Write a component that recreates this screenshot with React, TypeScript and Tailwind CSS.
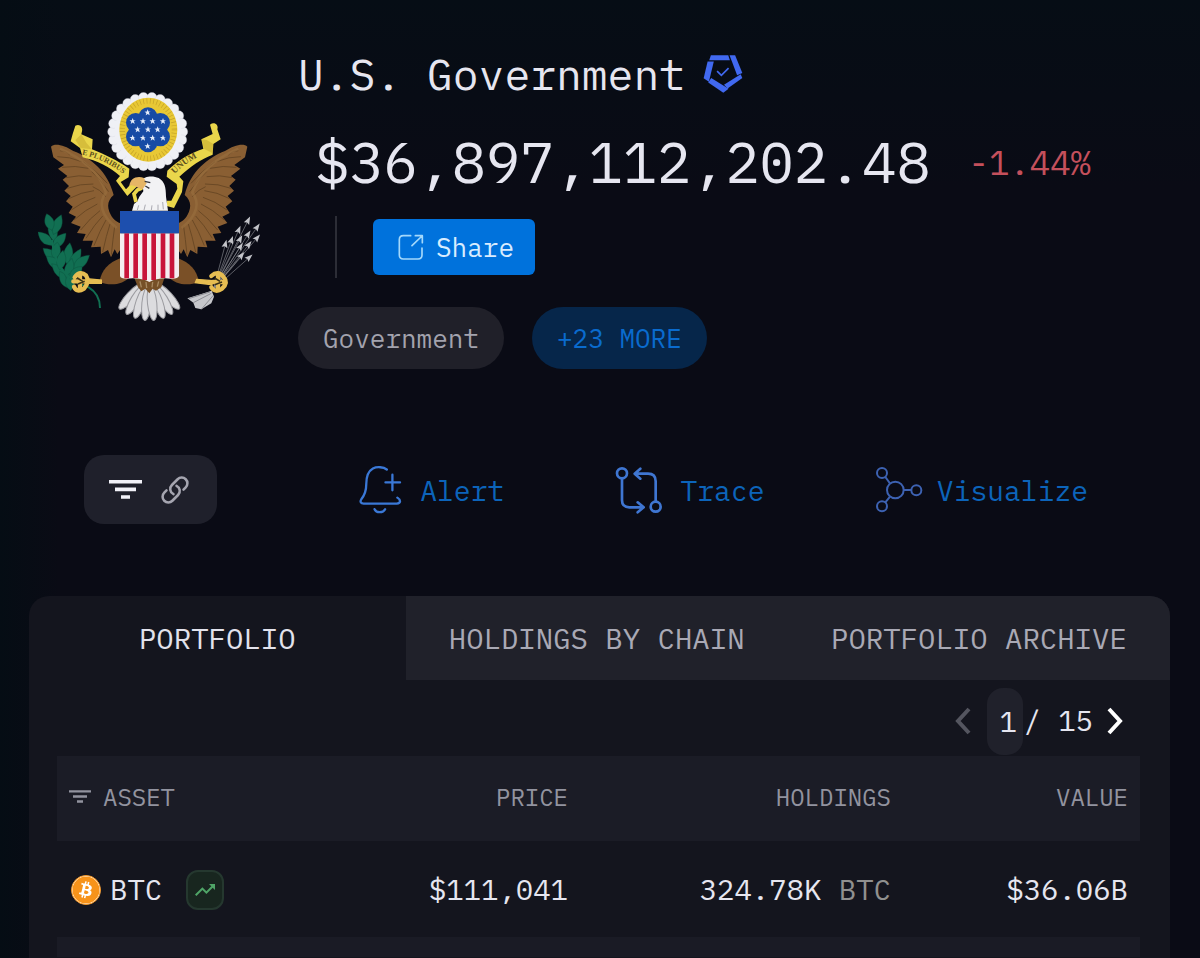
import React, { useState } from 'react';
import { FaBitcoin } from 'react-icons/fa';
import { MdTrendingUp } from 'react-icons/md';

interface Holding {
  symbol: string;
  price: string;
  amount: string;
  value: string;
}

const holdings: Holding[] = [
  { symbol: 'BTC', price: '$111,041', amount: '324.78K', value: '$36.06B' },
];

const tabs = ['PORTFOLIO', 'HOLDINGS BY CHAIN', 'PORTFOLIO ARCHIVE'];

const crestStars = [
  [383, 98], [338, 124], [369, 124], [398, 124], [429, 124], [353, 149], [384, 149],
  [413, 149], [338, 174], [369, 174], [398, 174], [429, 174], [383, 199],
];

// start x, start y, end x, end y of each feather crease on the left wing
const creases = [
  [150, 225, 120, 212], [185, 245, 112, 230], [205, 265, 126, 262], [215, 290, 138, 293],
  [220, 312, 142, 325], [222, 332, 146, 356], [226, 352, 154, 390], [232, 372, 162, 420],
  [240, 392, 182, 450], [248, 408, 198, 475], [258, 420, 222, 497], [270, 432, 248, 516],
  [284, 440, 274, 524], [262, 310, 190, 245], [266, 335, 215, 275], [258, 350, 218, 320],
];

const arrowHeads = [
  [684, 422], [711, 442], [656, 450], [684, 463], [634, 481], [660, 478], [711, 474],
  [616, 493], [686, 494], [661, 500], [664, 527], [687, 533],
];

const leaves = [
  [98, 450, -10, 38], [112, 434, 22, 32], [88, 426, -18, 26], [76, 476, -48, 30], [118, 482, 42, 30],
  [92, 524, -50, 30], [145, 520, 8, 32], [166, 536, 30, 34], [184, 546, 50, 32], [108, 512, 10, 26],
  [102, 548, -50, 30], [118, 574, -45, 32], [124, 540, 10, 30], [134, 600, -30, 30], [148, 566, 15, 32],
  [150, 606, -5, 26], [168, 578, 45, 26],
];

const scallops = Array.from({ length: 26 }, (_, i) => (i * Math.PI * 2) / 26);

const Wing: React.FC = () => (
  <g>
    <path
      fill="#8a5f33"
      d="M93 200C104 188 134 196 160 213C212 233 264 275 281 345C266 358 260 374 268 395C276 415 288 425 302 430V508L292 522L284 508L273 532L264 510L243 522L242 500L213 502L219 482L188 482L197 462L171 459L182 440L153 429L168 410L146 399L158 380L138 364L152 348L133 332L147 318L128 299L142 288L114 266L132 255L100 232Z"
    />
    {creases.map(([x1, y1, x2, y2], i) => (
      <path key={i} d={`M${x1} ${y1}Q${(x1 + x2) / 2} ${(y1 + y2) / 2 - 8} ${x2} ${y2}`} stroke="#6b4925" strokeWidth="3" fill="none" />
    ))}
    <path d="M120 206C190 236 240 280 258 338C236 366 240 404 290 444" stroke="#9a6f40" strokeWidth="8" opacity=".6" fill="none" />
    <path d="M302 534C265 548 245 570 238 606C275 620 310 612 330 590Z" fill="#7a5027" />
  </g>
);

const Crest: React.FC = () => (
  <svg viewBox="54 36 666 690" className="w-[222px] h-[230px] shrink-0" role="img" aria-label="Great Seal">
    <Wing />
    <g transform="translate(775 0) scale(-1 1)">
      <Wing />
    </g>

    {/* Glory */}
    <circle cx="383" cy="155" r="108" fill="#eff0f5" />
    {scallops.map((a) => (
      <circle key={a} cx={383 + 105 * Math.cos(a)} cy={155 + 103 * Math.sin(a)} r="15" fill="#eff0f5" stroke="#d3d6e0" strokeWidth="1" />
    ))}
    <circle cx="384" cy="153" r="100" fill="#eff0f5" />
    <ellipse cx="385" cy="149" rx="87" ry="96" fill="#e8c835" />
    <ellipse cx="385" cy="149" rx="78" ry="86" fill="none" stroke="#c4a128" strokeWidth="16" strokeDasharray="2 8" />
    <g fill="#174ba5">
      <circle cx="384" cy="149" r="52" />
      <circle cx="384" cy="110" r="28" />
      <circle cx="384" cy="189" r="28" />
      <circle cx="347" cy="128" r="29" />
      <circle cx="421" cy="128" r="29" />
      <circle cx="347" cy="170" r="29" />
      <circle cx="421" cy="170" r="29" />
    </g>
    {crestStars.map(([x, y]) => (
      <path
        key={`${x}-${y}`}
        transform={`translate(${x} ${y})`}
        fill="#e4ecfa"
        d="M0-10L2.5-3.2L9.5-3L4-1.2L6 8L0 3.8L-6 8L-4 1.2L-9.5-3L-2.5-3.2Z"
      />
    ))}

    {/* Motto ribbon */}
    <path fill="#ead64b" d="M166 137C178 130 190 140 186 154L184 163L218 178L216 208C255 224 290 240 328 266L326 292L302 306L318 328L344 300L356 314L322 348L288 302L300 288C270 262 232 242 188 232L180 204L152 184L158 162Z" />
    <path fill="#b99c24" d="M184 163L166 180L182 204L216 208L200 190Z" opacity=".4" />
    <path fill="#ead64b" d="M570 134C582 124 597 134 592 148L602 178L580 192L578 224C545 236 512 258 478 290L490 304L486 336L462 384L440 378L440 362L454 362L472 326L470 312L440 290L442 272C474 240 512 218 550 206L544 178L578 162Z" />
    <path fill="#b99c24" d="M544 178L560 180L580 192L578 220L552 206Z" opacity=".4" />
    <path id="motto-left" d="M186 224Q262 238 326 296" fill="none" />
    <path id="motto-right" d="M464 282Q500 242 570 216" fill="none" />
    <g fontFamily="Liberation Serif, serif" fontWeight="bold" fill="#5c4f1c">
      <text fontSize="23"><textPath href="#motto-left">E PLURIBUS</textPath></text>
      <text fontSize="27"><textPath href="#motto-right">UNUM</textPath></text>
    </g>

    {/* Tail */}
    {[-43, 43, -31, 31, -19, 19, -6, 6].map((angle) => (
      <ellipse key={angle} cx="388" cy="670" rx="14" ry="52" transform={`rotate(${-angle} 388 590)`} fill="#dcdcdf" stroke="#9a9a9f" strokeWidth="3" />
    ))}
    <path d="M342 592H434L424 622L408 632L398 626L388 640L376 626L364 634L354 622Z" fill="#765027" />
    <path d="M360 604L364 622M378 606L380 624M398 606L396 622M416 604L412 620" stroke="#a78a62" strokeWidth="4" />

    {/* Head */}
    <path fill="#f2f2f4" d="M366 300C372 288 400 286 416 294C434 304 438 322 438 350L444 392H336L342 372L352 364L358 350L370 334Z" />
    <path fill="none" stroke="#ead64b" strokeWidth="11" d="M348 366L342 342L352 330L366 324" />
    <path fill="#e5b566" d="M372 294C350 286 330 296 328 318C340 310 348 324 368 328L380 310Z" />
    <path d="M374 304L391 308M376 318L388 325" stroke="#34343a" strokeWidth="4" />
    <path d="M352 390L356 376M372 390L376 374M394 390L396 376M414 390L414 374M430 388L428 366" stroke="#aaaab2" strokeWidth="3" />

    {/* Shield */}
    <path fill="#f4edf0" d="M300 460H477V588Q472 598 452 596Q414 592 388 606Q362 592 320 596Q302 596 300 588Z" />
    <path stroke="#c8143a" strokeWidth="14" d="M320 460V595M347 460V594M374 460V600M401 460V600M429 460V594M456 460V595" />
    <path fill="#1d4fae" d="M300 393H477V460H300Z" />

    {/* Olive branch */}
    <g fill="#116f52">
      {leaves.map(([x, y, angle, length]) => (
        <path key={`${x}-${y}`} transform={`translate(${x} ${y}) rotate(${angle})`} d={`M0 ${length}C-22 8-14-12 0-${length}C14-12 22 8 0 ${length}Z`} stroke="#0b4c3a" strokeWidth="1" />
      ))}
      <path d="M96 480C102 550 134 600 206 622C230 636 240 658 240 684" fill="none" stroke="#116f52" strokeWidth="6" />
    </g>

    {/* Arrows */}
    {arrowHeads.map(([x, y]) => (
      <g key={`${x}-${y}`}>
        <path d={`M580 628L${x} ${y}`} stroke="#85868c" strokeWidth="2" />
        <path transform={`translate(${x} ${y}) rotate(${(Math.atan2(y - 628, x - 580) * 180) / Math.PI + 90})`} d="M0-14L9 10L0 6L-9 10Z" fill="#c3c4c9" />
      </g>
    ))}
    <path d="M575 632L544 642L502 655L520 668L526 684L544 688L574 670L582 650Z" fill="#c6c7cb" />
    <path d="M574 640L520 668M580 646L544 688M570 636L506 656" stroke="#8b8c92" strokeWidth="3" />

    {/* Talons */}
    <path d="M200 596L244 600V610L204 610ZM530 598L576 602V614L526 608Z" fill="#e6bd52" stroke="#e6bd52" strokeWidth="4" />
    <g fill="none" stroke="#e6bd52" strokeWidth="13" strokeLinecap="round">
      <path d="M164 592Q180 570 198 586Q210 604 192 626Q170 640 162 620M160 604H196M180 584V628" />
      <path d="M574 588Q594 570 610 590Q626 608 606 626Q586 640 574 622M578 606H612M594 584V628" />
    </g>
    <path d="M172 594L188 604M174 612L194 604M584 594L600 604M584 614L606 606" stroke="#3b3216" strokeWidth="5" />
  </svg>
);

const VerifiedBadge: React.FC = () => (
  <svg viewBox="1240 50 122 118" className="w-10 h-10" role="img" aria-label="Verified">
    <g fill="#4169f0">
      <path d="M1264 52H1317L1322 67H1259Z" />
      <path d="M1321 52H1338L1360 106L1344 113Z" />
      <path d="M1355 110L1360 121L1315 153L1304 142Z" />
      <path d="M1265 121L1318 154L1302 166L1256 135Z" />
      <path d="M1254 71H1273L1258 133L1242 122Z" />
    </g>
    <path d="M1283 100L1296 113L1318 91" fill="none" stroke="#4169f0" strokeWidth="5" />
  </svg>
);

const FilterIcon: React.FC<{ className: string }> = ({ className }) => (
  <svg viewBox="0 0 33 19" className={className} fill="currentColor" aria-hidden="true">
    <path d="M0 0H33V3.6H0ZM6 7.6H27V11.2H6ZM12 15.2H21V18.8H12Z" />
  </svg>
);

const LinkIcon: React.FC = () => (
  <svg viewBox="1 1 22 22" className="w-7 h-7" fill="none" stroke="#a5a5b0" strokeWidth="2" strokeLinecap="round" strokeLinejoin="round" aria-hidden="true">
    <path d="M13.19 8.688a4.5 4.5 0 0 1 1.242 7.244l-4.5 4.5a4.5 4.5 0 0 1-6.364-6.364l1.757-1.757m13.35-.622 1.757-1.757a4.5 4.5 0 0 0-6.364-6.364l-4.5 4.5a4.5 4.5 0 0 0 1.242 7.244" />
  </svg>
);

const ShareIcon: React.FC = () => (
  <svg viewBox="324 102 78 78" className="w-[26px] h-[26px]" fill="none" stroke="#a3d8fb" strokeWidth="5" strokeLinecap="round" strokeLinejoin="round" aria-hidden="true">
    <path d="M362 107H340Q328 107 328 119V165Q328 177 340 177H384Q396 177 396 165V144M366 137L396 108M376 107H397V128" />
  </svg>
);

const BellIcon: React.FC = () => (
  <svg viewBox="870 75 130 147" className="w-[43px] h-[49px]" fill="none" stroke="currentColor" strokeWidth="7" strokeLinecap="round" aria-hidden="true">
    <path d="M954 88C944 80 924 79 912 85C896 94 892 110 892 132C892 155 886 167 877 178C872 186 876 191 884 191H984C997 190 997 180 986 173M971 104V151M950 127H994M917 208C922 220 943 220 949 208" />
  </svg>
);

const TraceIcon: React.FC = () => (
  <svg viewBox="49 72 144 144" className="w-12 h-12" fill="none" stroke="currentColor" strokeWidth="8" strokeLinecap="round" strokeLinejoin="round" aria-hidden="true">
    <circle cx="70" cy="94" r="15" />
    <circle cx="171" cy="194" r="15" />
    <path d="M70 110V175Q70 196 92 196H133M117 181L135 196L117 211M171 178V118Q171 95 148 95H110M125 80L108 95L125 110" />
  </svg>
);

const VisualizeIcon: React.FC = () => (
  <svg viewBox="827 73 144 144" className="w-12 h-12" fill="none" stroke="currentColor" strokeWidth="6" aria-hidden="true">
    <circle cx="848" cy="94" r="15" />
    <circle cx="848" cy="194" r="15" />
    <circle cx="888" cy="145" r="25" />
    <circle cx="951" cy="146" r="15" />
    <path d="M858 106L872 125M858 182L872 165M913 145H936" />
  </svg>
);

const Chevron: React.FC<{ className: string; d: string }> = ({ className, d }) => (
  <svg viewBox="0 0 16 28" className={`w-4 h-7 ${className}`} fill="none" stroke="currentColor" strokeWidth="4" aria-hidden="true">
    <path d={d} />
  </svg>
);

export default function App() {
  const [activeTab, setActiveTab] = useState(0);
  const [page, setPage] = useState('1');

  return (
    <main className="min-h-screen flex flex-col bg-[#0a0b15] bg-[linear-gradient(to_right,#050d14,transparent_5%),linear-gradient(to_bottom,#060d15,transparent_20%)] text-[#e6e6f0] font-['IBM_Plex_Mono','DejaVu_Sans_Mono',monospace]">
      <header className="flex items-start gap-[38px] pl-[38px] pr-10 pt-12">
        <div className="pt-11">
          <Crest />
        </div>
        <div className="flex-1 min-w-0">
          <div className="flex items-center gap-[18px]">
            <h1 className="text-[43px] leading-[52px]">U.S. Government</h1>
            <VerifiedBadge />
          </div>

          <div className="flex items-center gap-[38px] mt-7 pl-[17px]">
            <span className="text-[57px] leading-[68px]">$36,897,112,202.48</span>
            <span className="text-[34px] leading-[68px] text-[#c4505c]">-1.44%</span>
          </div>

          <div className="flex items-center gap-9 mt-5 pl-[37px]">
            <div className="w-0.5 h-[62px] bg-[#2c2d36]" />
            <button type="button" className="flex items-center gap-3 h-14 pl-[25px] pr-[21px] rounded-md bg-[#0072dc] text-[26px] text-[#d8ecff]">
              <ShareIcon />
              Share
            </button>
          </div>

          <div className="flex gap-7 mt-[29px]">
            <a href="#government" className="h-[62px] px-[25px] rounded-full bg-[#202029] text-[26px] leading-[62px] text-[#a3a3ae]">
              Government
            </a>
            <button type="button" className="h-[62px] px-[25px] rounded-full bg-[#06264a] text-[26px] leading-[62px] text-[#0a6bce]">
              +23 MORE
            </button>
          </div>
        </div>
      </header>

      <nav className="flex items-center justify-between pl-[84px] pr-[112px] mt-[86px] text-[28px] text-[#0c64ba]">
        <button type="button" aria-label="Filters and link" className="flex items-center gap-[19px] h-[69px] pl-[25px] pr-7 mr-8 rounded-[20px] bg-[#1f202b]">
          <FilterIcon className="w-[33px] h-[19px] text-[#f1f1f8]" />
          <LinkIcon />
        </button>
        <a href="#alert" className="flex items-center gap-[18px]">
          <span className="text-[#3a78d6]"><BellIcon /></span>
          <span className="pt-0.5">Alert</span>
        </a>
        <a href="#trace" className="flex items-center gap-[18px]">
          <span className="text-[#3f76d2]"><TraceIcon /></span>
          <span className="pt-0.5">Trace</span>
        </a>
        <a href="#visualize" className="flex items-center gap-[14px]">
          <span className="text-[#3d62b2]"><VisualizeIcon /></span>
          <span className="pt-0.5">Visualize</span>
        </a>
      </nav>

      <section className="flex-1 ml-[29px] mr-[30px] mt-[72px] rounded-t-[20px] overflow-hidden bg-[#14151e]">
        <div className="flex" role="tablist">
          {tabs.map((tab, index) => (
            <button
              key={tab}
              type="button"
              role="tab"
              aria-selected={activeTab === index}
              onClick={() => setActiveTab(index)}
              className={`h-[84px] pt-0.5 text-[29px] whitespace-nowrap ${index === 0 ? 'w-[33%]' : 'flex-1'} ${
                activeTab === index ? 'text-[#e2e2ec]' : 'bg-[#20212a] text-[#a9a9b5]'
              }`}
            >
              {tab}
            </button>
          ))}
        </div>

        <div className="flex items-center justify-end h-[76px] pt-1.5 pr-[47px] text-[29px]">
          <button type="button" aria-label="Previous page" className="mr-4">
            <Chevron className="text-[#54555f]" d="M14 2L3 14L14 26" />
          </button>
          <input
            aria-label="Page"
            value={page}
            onChange={(e) => setPage(e.target.value)}
            className="w-9 h-[67px] rounded-2xl bg-[#20212b] pl-3 outline-none"
          />
          <span className="whitespace-pre">/ 15</span>
          <button type="button" aria-label="Next page" className="ml-[14px]">
            <Chevron className="text-white" d="M2 2L13 14L2 26" />
          </button>
        </div>

        <div className="pl-7 pr-[30px]">
          <table className="w-full table-fixed border-collapse text-[29px] text-right">
            <colgroup>
              <col />
              <col className="w-[260px]" />
              <col className="w-[323px]" />
              <col className="w-[237px]" />
            </colgroup>
            <thead>
              <tr className="h-[85px] bg-[#1b1c26] text-2xl text-[#92939f]">
                <th className="px-3 pb-1 font-normal">
                  <span className="flex items-center gap-3">
                    <FilterIcon className="w-[22px] h-[13px]" />
                    ASSET
                  </span>
                </th>
                <th className="px-3 pb-1 font-normal">PRICE</th>
                <th className="px-3 pb-1 font-normal">HOLDINGS</th>
                <th className="px-3 pb-1 font-normal">VALUE</th>
              </tr>
            </thead>
            <tbody>
              {holdings.map((holding) => (
                <tr key={holding.symbol} className="h-24">
                  <td className="pl-[14px] pt-0.5">
                    <span className="flex items-center">
                      <span className="mr-[9px] rounded-full bg-white border border-[#f7931a]">
                        <FaBitcoin className="w-7 h-7 text-[#f7931a]" />
                      </span>
                      {holding.symbol}
                      <span className="ml-6 flex items-center justify-center w-[38px] h-10 rounded-xl border-2 border-[#25382f] bg-[#18261f]">
                        <MdTrendingUp className="w-6 h-6 text-[#4fa567]" />
                      </span>
                    </span>
                  </td>
                  <td className="px-3 pt-0.5">{holding.price}</td>
                  <td className="px-3 pt-0.5 whitespace-nowrap">
                    {holding.amount} <span className="text-[#90908f]">{holding.symbol}</span>
                  </td>
                  <td className="px-3 pt-0.5">{holding.value}</td>
                </tr>
              ))}
              <tr className="h-5 bg-[#1a1b25]" aria-hidden="true">
                <td colSpan={4} />
              </tr>
            </tbody>
          </table>
        </div>
      </section>
    </main>
  );
}
